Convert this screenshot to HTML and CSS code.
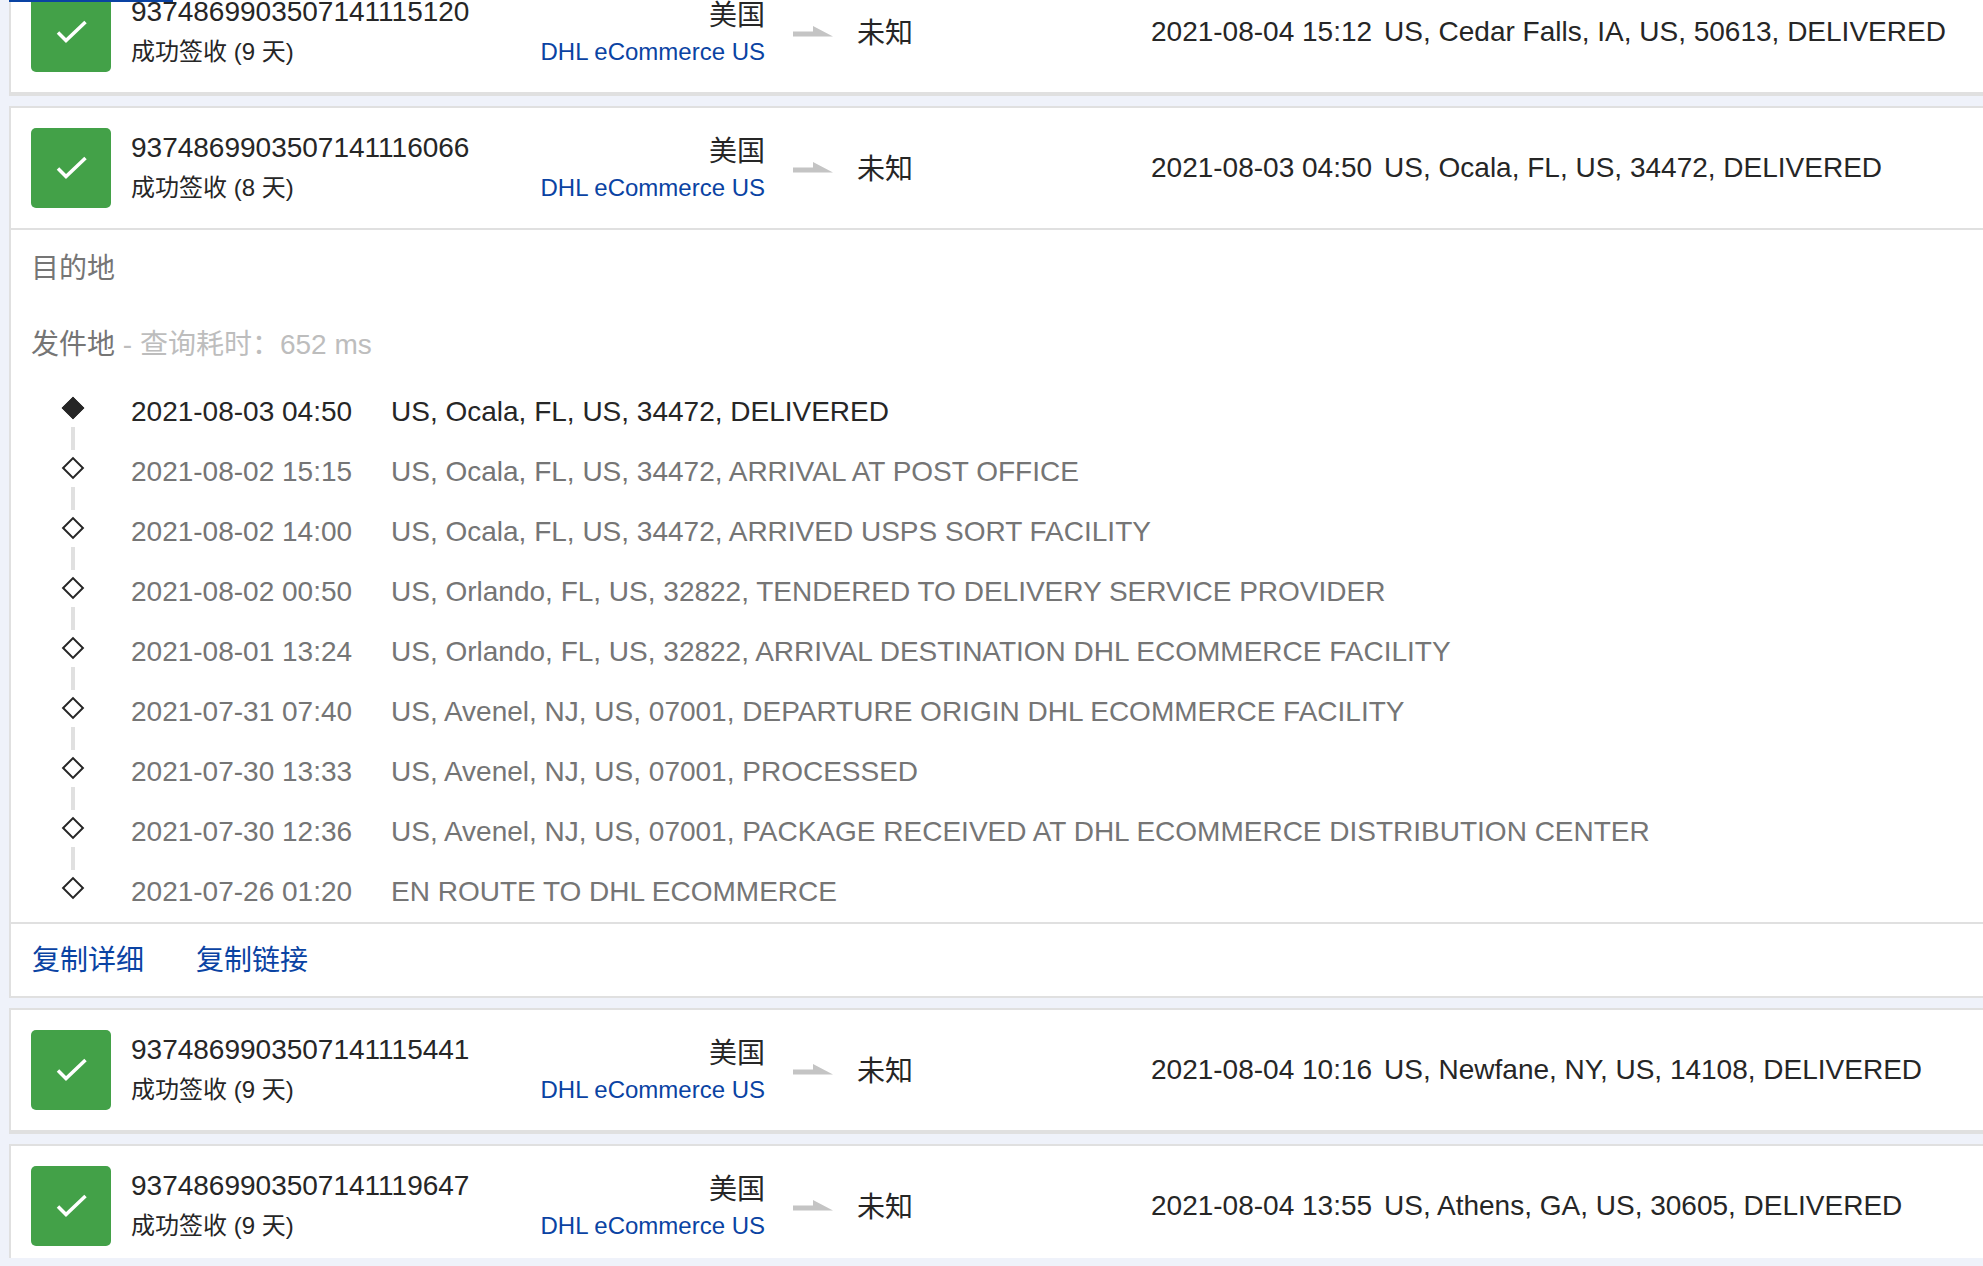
FILE: index.html
```html
<!DOCTYPE html>
<html lang="zh">
<head>
<meta charset="utf-8">
<title>查询结果</title>
<link rel="stylesheet" href="styles.css">
</head>
<body>
<div class="tab-indicator"></div>
<main class="list">

<section class="card">
  <div class="head">
    <div class="status"><svg viewBox="0 0 80 80"><path class="tick" d="M27 40.500 L35 48.500 L54.500 30"/></svg></div>
    <div class="ident"><div class="num">9374869903507141115120</div><div class="state">成功签收 (9 天)</div></div>
    <div class="origin"><div class="country">美国</div><a class="carrier">DHL eCommerce US</a></div>
    <svg class="arrow" viewBox="0 0 40 11"><path d="M0 5.500 H20 V0 L40 10.500 H0 Z"/></svg>
    <div class="dest">未知</div>
    <div class="latest"><span class="latest-time">2021-08-04 15:12</span><span>US, Cedar Falls, IA, US, 50613, DELIVERED</span></div>
  </div>
</section>

<section class="card card-open">
  <div class="head">
    <div class="status"><svg viewBox="0 0 80 80"><path class="tick" d="M27 40.500 L35 48.500 L54.500 30"/></svg></div>
    <div class="ident"><div class="num">9374869903507141116066</div><div class="state">成功签收 (8 天)</div></div>
    <div class="origin"><div class="country">美国</div><a class="carrier">DHL eCommerce US</a></div>
    <svg class="arrow" viewBox="0 0 40 11"><path d="M0 5.500 H20 V0 L40 10.500 H0 Z"/></svg>
    <div class="dest">未知</div>
    <div class="latest"><span class="latest-time">2021-08-03 04:50</span><span>US, Ocala, FL, US, 34472, DELIVERED</span></div>
  </div>
  <div class="detail">
    <div class="place">目的地</div>
    <div class="place place-origin">发件地<span class="elapsed"> - 查询耗时：652 ms</span></div>
    <ol class="timeline">
      <li class="event current"><span class="time">2021-08-03 04:50</span><span>US, Ocala, FL, US, 34472, DELIVERED</span></li>
      <li class="event"><span class="time">2021-08-02 15:15</span><span>US, Ocala, FL, US, 34472, ARRIVAL AT POST OFFICE</span></li>
      <li class="event"><span class="time">2021-08-02 14:00</span><span>US, Ocala, FL, US, 34472, ARRIVED USPS SORT FACILITY</span></li>
      <li class="event"><span class="time">2021-08-02 00:50</span><span>US, Orlando, FL, US, 32822, TENDERED TO DELIVERY SERVICE PROVIDER</span></li>
      <li class="event"><span class="time">2021-08-01 13:24</span><span>US, Orlando, FL, US, 32822, ARRIVAL DESTINATION DHL ECOMMERCE FACILITY</span></li>
      <li class="event"><span class="time">2021-07-31 07:40</span><span>US, Avenel, NJ, US, 07001, DEPARTURE ORIGIN DHL ECOMMERCE FACILITY</span></li>
      <li class="event"><span class="time">2021-07-30 13:33</span><span>US, Avenel, NJ, US, 07001, PROCESSED</span></li>
      <li class="event"><span class="time">2021-07-30 12:36</span><span>US, Avenel, NJ, US, 07001, PACKAGE RECEIVED AT DHL ECOMMERCE DISTRIBUTION CENTER</span></li>
      <li class="event"><span class="time">2021-07-26 01:20</span><span>EN ROUTE TO DHL ECOMMERCE</span></li>
    </ol>
  </div>
  <div class="actions"><a class="action">复制详细</a><a class="action">复制链接</a></div>
</section>

<section class="card">
  <div class="head">
    <div class="status"><svg viewBox="0 0 80 80"><path class="tick" d="M27 40.500 L35 48.500 L54.500 30"/></svg></div>
    <div class="ident"><div class="num">9374869903507141115441</div><div class="state">成功签收 (9 天)</div></div>
    <div class="origin"><div class="country">美国</div><a class="carrier">DHL eCommerce US</a></div>
    <svg class="arrow" viewBox="0 0 40 11"><path d="M0 5.500 H20 V0 L40 10.500 H0 Z"/></svg>
    <div class="dest">未知</div>
    <div class="latest"><span class="latest-time">2021-08-04 10:16</span><span>US, Newfane, NY, US, 14108, DELIVERED</span></div>
  </div>
</section>

<section class="card">
  <div class="head">
    <div class="status"><svg viewBox="0 0 80 80"><path class="tick" d="M27 40.500 L35 48.500 L54.500 30"/></svg></div>
    <div class="ident"><div class="num">9374869903507141119647</div><div class="state">成功签收 (9 天)</div></div>
    <div class="origin"><div class="country">美国</div><a class="carrier">DHL eCommerce US</a></div>
    <svg class="arrow" viewBox="0 0 40 11"><path d="M0 5.500 H20 V0 L40 10.500 H0 Z"/></svg>
    <div class="dest">未知</div>
    <div class="latest"><span class="latest-time">2021-08-04 13:55</span><span>US, Athens, GA, US, 30605, DELIVERED</span></div>
  </div>
</section>

</main>
<div class="page-bottom"></div>
</body>
</html>
```
FILE: styles.css
```css
html, body {
  margin: 0;
  padding: 0;
  height: 100%;
  overflow: hidden;
  background: #eff2fa;
}
body {
  font-family: "Liberation Sans", "Noto Sans CJK SC", sans-serif;
  color: #262626;
  font-size: 28px;
}
.tab-indicator {
  position: absolute;
  top: 0;
  left: 9px;
  width: 164px;
  height: 2px;
  background: #0a43a3;
  z-index: 2;
}
.page-bottom {
  position: fixed;
  left: 0;
  right: 0;
  bottom: 0;
  height: 8px;
  background: #eff2fa;
}
.list {
  display: flex;
  flex-direction: column;
  gap: 10px;
  margin: -30px 0 0 9px;
}
.card {
  background: #fff;
  border: solid #e0e0e0;
  border-width: 2px 0 4px 2px;
}
.card-open { border-bottom-width: 2px; }
.head {
  height: 120px;
  display: flex;
  align-items: center;
  padding-left: 20px;
  box-sizing: border-box;
}
.status {
  flex: none;
  width: 80px;
  height: 80px;
  border-radius: 5px;
  background: #43a148;
}
.status svg { display: block; width: 80px; height: 80px; }
.tick { fill: none; stroke: #fff; stroke-width: 3.500; }
.ident {
  flex: none;
  width: 350px;
  margin-left: 20px;
}
.num { line-height: 40px; }
.state { line-height: 40px; font-size: 24px; }
.origin {
  flex: none;
  width: 284px;
  text-align: right;
  white-space: nowrap;
}
.country { line-height: 48px; }
.carrier { display: block; line-height: 40px; margin-top: -8px; font-size: 24px; color: #0a43a3; }
.arrow {
  flex: none;
  width: 40px;
  height: 11px;
  margin: 0 0 2px 28px;
  fill: #c4c4c4;
}
.dest { flex: none; width: 294px; margin: 0 0 2px 24px; }
.latest { white-space: nowrap; }
.latest-time { margin-right: 12px; }
.detail {
  border-top: 2px solid #e0e0e0;
  padding: 0 0 0 20px;
}
.place {
  color: #757575;
  line-height: 40px;
  margin-top: 19px;
}
.place-origin { margin-top: 36px; }
.elapsed { color: #bdbdbd; }
.timeline {
  list-style: none;
  margin: 17px 0 0;
  padding: 0;
}
.event {
  display: flex;
  height: 60px;
  line-height: 60px;
  padding-left: 100px;
  box-sizing: border-box;
  color: #757575;
  position: relative;
}
.current { color: #262626; }
.time { flex: none; width: 260px; }
.event::before {
  content: "";
  position: absolute;
  left: 34px;
  top: 18px;
  width: 16px;
  height: 16px;
  box-sizing: border-box;
  border: 2px solid #262626;
  background: #fff;
  transform: rotate(45deg);
}
.current::before { background: #262626; }
.event::after {
  content: "";
  position: absolute;
  left: 40px;
  top: 45px;
  width: 4px;
  height: 23px;
  background: #e0e0e0;
}
.event:last-child::after { display: none; }
.actions {
  border-top: 2px solid #e0e0e0;
  height: 74px;
  display: flex;
  align-items: center;
  gap: 52px;
  padding: 2px 0 0 21px;
  box-sizing: border-box;
}
.action { color: #0a43a3; line-height: 40px; }
```
